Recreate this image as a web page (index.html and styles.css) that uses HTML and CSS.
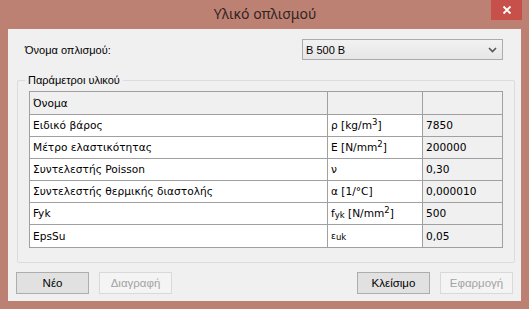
FILE: index.html
```html
<!DOCTYPE html>
<html>

<head>
    <title>Υλικό οπλισμού</title>
    <link rel="stylesheet" href="styles.css">
</head>

<body>

    <div class="window">
        <div class="titlebar">
            <span></span>
            <span class="title">Υλικό οπλισμού</span>
            <span class="close">
                <svg width="10" height="10" viewBox="0 0 10 10">
                    <path d="M1.5 1.5 L8.5 8.5 M8.5 1.5 L1.5 8.5" stroke="#fff" stroke-width="1.8" fill="none" />
                </svg>
            </span>
        </div>

        <div class="client">
            <div class="name-row">
                <label class="name-label">Όνομα οπλισμού:</label>
                <div class="combo">
                    <span>B 500 B</span>
                    <svg width="9" height="6" viewBox="0 0 9 6">
                        <path d="M1 1 L4.5 4.5 L8 1" stroke="#555" stroke-width="1.6" fill="none" />
                    </svg>
                </div>
            </div>

            <div class="group">
                <div class="group-title">Παράμετροι υλικού</div>
                <table class="grid">
                    <colgroup>
                        <col class="col-name">
                        <col class="col-unit">
                        <col class="col-value">
                    </colgroup>
                    <tr class="head-row">
                        <td>Όνομα</td>
                        <td></td>
                        <td class="value"></td>
                    </tr>
                    <tr>
                        <td>Ειδικό βάρος</td>
                        <td>ρ [kg/m<sup>3</sup>]</td>
                        <td class="value">7850</td>
                    </tr>
                    <tr>
                        <td>Μέτρο ελαστικότητας</td>
                        <td>E [N/mm<sup>2</sup>]</td>
                        <td class="value">200000</td>
                    </tr>
                    <tr>
                        <td>Συντελεστής Poisson</td>
                        <td>ν</td>
                        <td class="value">0,30</td>
                    </tr>
                    <tr>
                        <td>Συντελεστής θερμικής διαστολής</td>
                        <td>α [1/°C]</td>
                        <td class="value">0,000010</td>
                    </tr>
                    <tr>
                        <td>Fyk</td>
                        <td>f<sub>yk</sub> [N/mm<sup>2</sup>]</td>
                        <td class="value">500</td>
                    </tr>
                    <tr>
                        <td>EpsSu</td>
                        <td><span class="small">ε<sub>uk</sub></span></td>
                        <td class="value">0,05</td>
                    </tr>
                </table>
            </div>

            <div class="buttons">
                <div class="btn-group">
                    <button class="btn">Νέο</button>
                    <button class="btn" disabled>Διαγραφή</button>
                </div>
                <div class="btn-group">
                    <button class="btn">Κλείσιμο</button>
                    <button class="btn" disabled>Εφαρμογή</button>
                </div>
            </div>
        </div>
    </div>

</body>

</html>
```

FILE: styles.css
```css
body {
    margin: 0;
    background-color: #bd8174;
    font-family: "Liberation Sans", Arial, sans-serif;
    font-size: 11px;
    color: #000;
}

.window {
    width: 529px;
    height: 309px;
    display: flex;
    flex-direction: column;
}

.titlebar {
    height: 29px;
    display: grid;
    grid-template-columns: 1fr auto 1fr;
    padding: 0 7px 0 8px;
}

.title {
    font-family: "Noto Sans", sans-serif;
    font-size: 14px;
    color: #33241f;
    line-height: 28px;
}

.close {
    justify-self: end;
    width: 31px;
    height: 20px;
    background-color: #c7504a;
    display: flex;
    align-items: center;
    justify-content: center;
}

.client {
    flex: 1;
    margin: 0 8px 8px 8px;
    background-color: #f0f0f0;
    display: flex;
    flex-direction: column;
}

.name-row {
    display: flex;
    align-items: center;
    padding: 10px 18px 0 17px;
}

.name-label {
    flex: 1;
}

.combo {
    width: 201px;
    height: 21px;
    box-sizing: border-box;
    border: 1px solid #acacac;
    background: linear-gradient(#f2f2f2, #e6e6e6);
    display: flex;
    align-items: center;
    justify-content: space-between;
    padding: 0 5px 0 3px;
}

.group {
    margin: 20px 6px 0 9px;
    border: 1px solid #dcdcdc;
    border-radius: 2px;
    padding: 0 12px 14px 11px;
}

.group-title {
    width: max-content;
    margin: -9px 0 0 -4px;
    padding: 0 3px;
    height: 16px;
    line-height: 16px;
    background-color: #f0f0f0;
}

.grid {
    margin-top: 3px;
    width: 473px;
    table-layout: fixed;
    border-collapse: collapse;
    border: 1px solid #8a8a8a;
    font-family: "DejaVu Sans", sans-serif;
    font-size: 10.6px;
}

.col-name {
    width: 298px;
}

.col-unit {
    width: 95px;
}

.col-value {
    width: 80px;
}

.grid td {
    height: 21px;
    line-height: 21px;
    padding: 0 0 0 3px;
    border: 1px solid #a0a0a0;
    background-color: #fff;
    white-space: nowrap;
    overflow: hidden;
}

.grid td.value {
    background-color: #f0f0f0;
}

.grid .head-row td {
    height: 22px;
    line-height: 22px;
    background-color: #f0f0f0;
}

.grid sup,
.grid sub {
    font-size: 8.5px;
    line-height: 0;
    vertical-align: baseline;
    position: relative;
}

.grid sup {
    top: -4px;
}

.grid sub {
    top: 1px;
}

.small {
    font-size: 9px;
}

.buttons {
    display: flex;
    justify-content: space-between;
    padding: 9px 8px 0 8px;
}

.btn-group {
    display: flex;
    gap: 10px;
}

.btn {
    width: 73px;
    height: 22px;
    border: 1px solid #adadad;
    background-color: #e1e1e1;
    font-family: "Liberation Sans", Arial, sans-serif;
    font-size: 11.5px;
    color: #000;
    padding: 0;
}

.btn:disabled {
    border-color: #d9d9d9;
    background-color: #f4f4f4;
    color: #a3a3a3;
}
```
